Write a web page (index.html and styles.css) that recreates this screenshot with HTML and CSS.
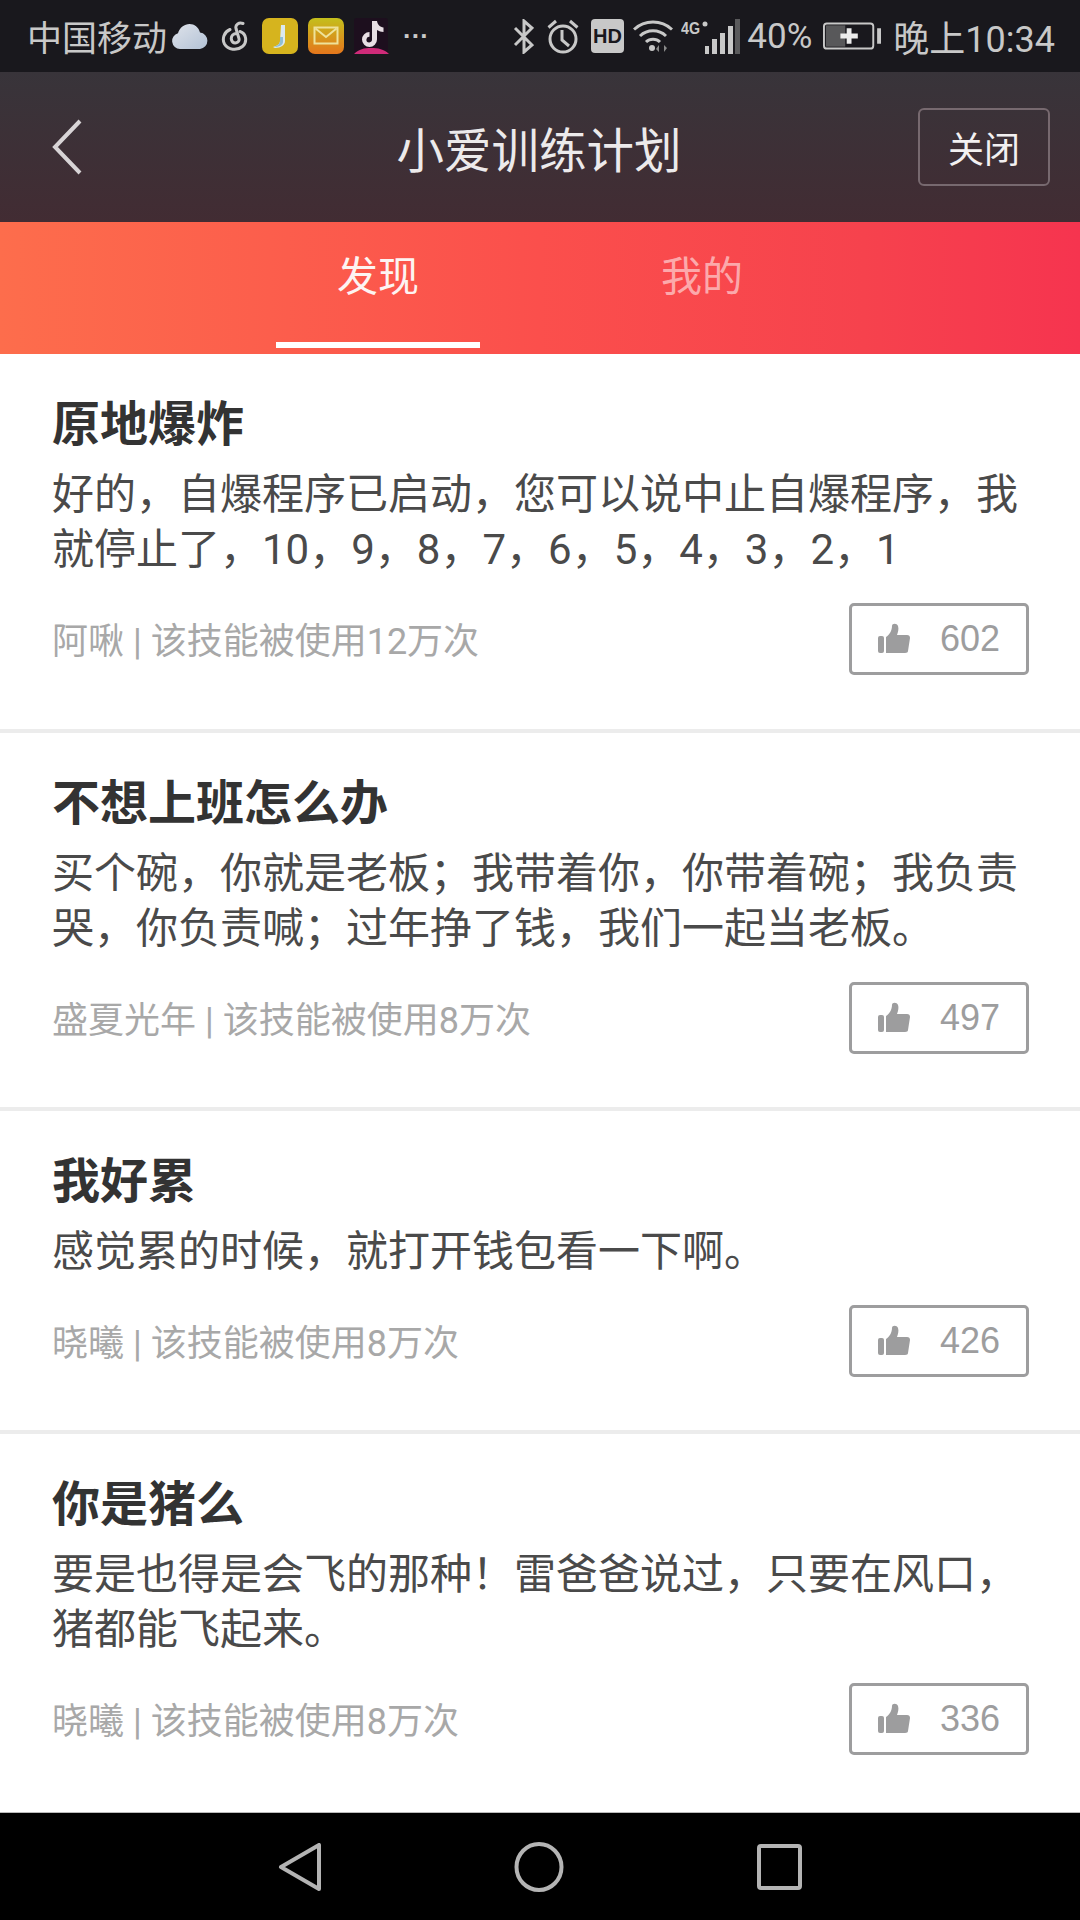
FILE: index.html
```html
<!DOCTYPE html>
<html lang="zh">
<head>
<meta charset="utf-8">
<title>小爱训练计划</title>
<link rel="stylesheet" href="styles.css">
</head>
<body>
<div class="app">
  <div class="status">
    <div class="status-left">
      <span class="carrier">中国移动</span>
      <svg class="ic cloud" viewBox="0 0 36 25"><defs><linearGradient id="cl" x1="0" y1="0" x2="1" y2="1"><stop offset="0" stop-color="#dfe3ea"/><stop offset="1" stop-color="#b3c2d6"/></linearGradient></defs><path d="M8 25a8 8 0 0 1-2-15.700C7.500 3.500 12.500 0 17.500 0c5 0 9 3 10.500 8.500a8.300 8.300 0 0 1 0 16.500z" fill="url(#cl)"/></svg>
      <svg class="ic netease" viewBox="0 0 28 30"><g fill="none" stroke="#c8c8c8" stroke-width="3" stroke-linecap="round"><path d="M22 2.500c-4-1.500-8 1-7 5l3 10c1 5-6 6-7.500 1.500-1-4 2-7 6-6.500"/><path d="M9 8.500C3 11 0.800 18 3.500 23c3.500 6 12.500 7 18 2.500 5-4.500 4-13-2.500-15"/></g></svg>
      <svg class="ic app-j" viewBox="0 0 36 36"><rect width="36" height="36" rx="7" fill="#d6b41e"/><path d="M19 7h4v16c0 4-4 7-10 7l-2-1c4-1 7-3 7-6z" fill="#dbe9ee"/><path d="M18 19h3v5c0 3-4 5-9 5 3-1 6-3 6-6z" fill="#8fbfd4"/></svg>
      <svg class="ic app-mail" viewBox="0 0 36 36"><defs><linearGradient id="mail" x1="0" y1="0" x2="0" y2="1"><stop offset="0" stop-color="#c4bf1c"/><stop offset="1" stop-color="#e5761c"/></linearGradient></defs><rect width="36" height="36" rx="7" fill="url(#mail)"/><rect x="6.500" y="9.500" width="23" height="16" fill="none" stroke="#eee29a" stroke-width="2"/><path d="M7.500 10.500L18 19l10.500-8.500" fill="none" stroke="#eee29a" stroke-width="2"/></svg>
      <svg class="ic app-tt" viewBox="0 0 36 36"><rect width="34" height="36" rx="3" fill="#1d0f1e"/><path d="M18 3h5c.5 3.500 3 6 6.500 6.500v4.500c-2.500 0-4.500-.8-6.500-2v9.500a7.500 7.500 0 1 1-7.500-7.500v4.800a2.800 2.800 0 1 0 2.500 2.800z" fill="#e8dfe4"/><path d="M0 36c5-5 10-6 17-6s13 1 18 6z" fill="#cf2b79"/></svg>
      <span class="dots">···</span>
    </div>
    <div class="status-right">
      <svg class="ic bt" viewBox="0 0 21 35"><path d="M2 9l17 17-8 7V2l8 7L2 26" fill="none" stroke="#c8c8c8" stroke-width="3"/></svg>
      <svg class="ic alarm" viewBox="0 0 32 35"><g fill="none" stroke="#c8c8c8" stroke-width="3"><circle cx="16" cy="20" r="13"/><path d="M15 11v10l7 6"/><path d="M1.500 8.500L9 2M30.500 8.500L23 2"/></g></svg>
      <svg class="ic hd" viewBox="0 0 33 34"><rect width="33" height="34" rx="4" fill="#c8c8c8"/><text x="16.500" y="24" class="hd-text">HD</text></svg>
      <svg class="ic wifi" viewBox="0 0 40 33"><g fill="none" stroke="#c8c8c8" stroke-width="3"><path d="M1 9.500a28 28 0 0 1 38 0"/><path d="M7 16a19 19 0 0 1 26 0"/><path d="M13 22a10 10 0 0 1 14 0"/></g><circle cx="19" cy="28" r="3" fill="#c8c8c8"/><path d="M26 32v-7l-3 4zM31 25v7l3-4z" fill="#8a8a8a"/></svg>
      <svg class="ic signal" viewBox="0 0 59 35"><text x="0" y="15" textLength="19" lengthAdjust="spacingAndGlyphs" class="sig-text">4G</text><circle cx="24" cy="5" r="2.500" fill="#c8c8c8"/><g fill="#c8c8c8"><rect x="24" y="27" width="4" height="8"/><rect x="31" y="20" width="5" height="15"/><rect x="39" y="14" width="5" height="21"/><rect x="47" y="7" width="5" height="28"/></g><rect x="54" y="0" width="5" height="35" fill="#5a5a5c"/></svg>
      <span class="pct">40%</span>
      <svg class="ic battery" viewBox="0 0 60 28"><rect x="1" y="1" width="51" height="26" rx="3" fill="none" stroke="#c8c8c8" stroke-width="2"/><rect x="3" y="3" width="20" height="22" fill="#58585a"/><path d="M18 14h18M27 6v16" stroke="#ececec" stroke-width="5"/><rect x="56" y="6" width="4" height="16" fill="#c8c8c8"/></svg>
      <span class="clock">晚上10:34</span>
    </div>
  </div>

  <header class="nav">
    <svg class="back" viewBox="0 0 30 56"><path d="M28 2L3 28l25 26" fill="none" stroke="#d8d4d6" stroke-width="4"/></svg>
    <h1 class="nav-title">小爱训练计划</h1>
    <button class="close">关闭</button>
  </header>

  <nav class="tabs">
    <div class="tab active">发现</div>
    <div class="tab">我的</div>
  </nav>

  <main class="list">
    <article class="card">
      <h2 class="title">原地爆炸</h2>
      <p class="body">好的，自爆程序已启动，您可以说中止自爆程序，我就停止了，10，9，8，7，6，5，4，3，2，1</p>
      <div class="foot">
        <span class="meta">阿啾 | 该技能被使用12万次</span>
        <div class="like"><svg class="thumb" viewBox="0 0 32 32"><use href="#thumb"/></svg><span>602</span></div>
      </div>
    </article>
    <article class="card">
      <h2 class="title">不想上班怎么办</h2>
      <p class="body">买个碗，你就是老板；我带着你，你带着碗；我负责哭，你负责喊；过年挣了钱，我们一起当老板。</p>
      <div class="foot">
        <span class="meta">盛夏光年 | 该技能被使用8万次</span>
        <div class="like"><svg class="thumb" viewBox="0 0 32 32"><use href="#thumb"/></svg><span>497</span></div>
      </div>
    </article>
    <article class="card">
      <h2 class="title">我好累</h2>
      <p class="body">感觉累的时候，就打开钱包看一下啊。</p>
      <div class="foot">
        <span class="meta">晓曦 | 该技能被使用8万次</span>
        <div class="like"><svg class="thumb" viewBox="0 0 32 32"><use href="#thumb"/></svg><span>426</span></div>
      </div>
    </article>
    <article class="card last">
      <h2 class="title">你是猪么</h2>
      <p class="body">要是也得是会飞的那种！雷爸爸说过，只要在风口，猪都能飞起来。</p>
      <div class="foot">
        <span class="meta">晓曦 | 该技能被使用8万次</span>
        <div class="like"><svg class="thumb" viewBox="0 0 32 32"><use href="#thumb"/></svg><span>336</span></div>
      </div>
    </article>
  </main>

  <footer class="softkeys">
    <svg class="key key-back" viewBox="0 0 43 48"><path d="M3 24L41 2v44z" fill="none" stroke="#b4b4b4" stroke-width="4" stroke-linejoin="round"/></svg>
    <svg class="key key-home" viewBox="0 0 50 50"><ellipse cx="25" cy="25" rx="22.500" ry="23" fill="none" stroke="#b4b4b4" stroke-width="4"/></svg>
    <svg class="key key-recent" viewBox="0 0 45 46"><rect x="2" y="2" width="41" height="42" rx="2" fill="none" stroke="#b4b4b4" stroke-width="4"/></svg>
  </footer>
</div>
<svg class="defs" width="0" height="0"><defs><g id="thumb"><rect x="0" y="13" width="6" height="17" rx="2" fill="#9d9d9e"/><path d="M8 14c3-2 6-6 6-11 0-3 5-3 6 0 1 3 0 6-1 9h10c2 0 3 1 3 3l-2 13c0 1-1 2-3 2H8z" fill="#9d9d9e"/></g></defs></svg>
</body>
</html>
```
FILE: styles.css
```css
* { box-sizing: border-box; margin: 0; padding: 0; }
html, body { width: 1080px; height: 1920px; overflow: hidden; background: #fff; }
body { font-family: "Noto Sans CJK SC", "Noto Sans", sans-serif; }
.defs { display: block; height: 0; }
.app { width: 1080px; height: 1920px; display: flex; flex-direction: column; }

.status { flex: none; height: 72px; background: #19181d; color: #c8c8c8; display: flex; justify-content: space-between; align-items: center; padding: 0 25px 0 27px; }
.status-left, .status-right { display: flex; align-items: center; }
.carrier { font-size: 35px; line-height: 40px; }
.ic { display: block; flex: none; }
.cloud { width: 36px; height: 25px; margin-left: 5px; }
.netease { width: 28px; height: 30px; margin-left: 13px; }
.app-j { width: 36px; height: 36px; margin-left: 13px; }
.app-mail { width: 36px; height: 36px; margin-left: 10px; }
.app-tt { width: 36px; height: 36px; margin-left: 10px; }
.dots { font-family: "Liberation Sans", sans-serif; font-size: 26px; font-weight: 700; margin-left: 13px; }
.bt { width: 21px; height: 35px; }
.alarm { width: 32px; height: 35px; margin-left: 13px; }
.hd { width: 33px; height: 34px; margin-left: 12px; }
.hd-text { font-family: "Liberation Sans", sans-serif; font-size: 20px; font-weight: 700; fill: #19181d; text-anchor: middle; }
.wifi { width: 40px; height: 33px; margin-left: 9px; }
.signal { width: 59px; height: 35px; margin-left: 8px; }
.sig-text { font-family: "Liberation Sans", sans-serif; font-size: 16px; font-weight: 700; fill: #c8c8c8; }
.pct { font-family: "Roboto", sans-serif; font-size: 35px; line-height: 40px; margin-left: 7px; padding-top: 2px; }
.battery { width: 58px; height: 28px; margin-left: 11px; }
.clock { font-family: "Roboto", "Noto Sans CJK SC", sans-serif; font-size: 36px; margin-left: 12px; }

.nav { flex: none; height: 150px; background: linear-gradient(180deg, #38343a 0%, #422c33 100%); display: flex; align-items: center; justify-content: space-between; padding: 0 30px 0 52px; position: relative; }
.back { width: 30px; height: 56px; }
.nav-title { position: absolute; left: 0; right: 0; text-align: center; font-size: 47.5px; font-weight: 400; color: #eceaeb; padding-right: 2px; }
.close { width: 132px; height: 78px; border: 2px solid #77696f; border-radius: 6px; background: transparent; color: #f2f0f1; font-family: inherit; font-size: 36px; position: relative; }

.tabs { flex: none; height: 132px; background: linear-gradient(90deg, #fd6d4c 0%, #fb4f4c 50%, #f6424d 80%, #f6344f 100%); display: flex; justify-content: center; gap: 120px; }
.tab { width: 204px; height: 126px; color: rgba(255,255,255,.55); font-size: 41px; display: flex; justify-content: center; padding-top: 23px; line-height: 56px; }
.tab.active { color: #fdf4f2; border-bottom: 6px solid #fff; }

.list { flex: 1; display: flex; flex-direction: column; }
.card { flex: none; padding: 34px 52px 0; border-bottom: 4px solid #ececec; height: 379px; }
.card:nth-child(2) { height: 378px; }
.card:nth-child(3) { height: 323px; }
.card.last { border-bottom: 0; height: 378px; }
.title { font-size: 48px; line-height: 64px; font-weight: 700; color: #333; }
.body { font-family: "Roboto", "Noto Sans CJK SC", sans-serif; font-size: 42px; line-height: 55px; color: #4a4a4a; margin-top: 15px; font-weight: 400; }
.foot { display: flex; justify-content: space-between; align-items: center; margin-top: 32px; margin-right: -1px; }
.meta { font-family: "Roboto", "Noto Sans CJK SC", sans-serif; font-size: 36px; line-height: 46px; color: #a8a8a8; }
.like { width: 180px; height: 72px; border: 3px solid #9d9d9e; border-radius: 5px; display: flex; align-items: center; padding-left: 26px; color: #9d9d9e; font-family: "Liberation Sans", sans-serif; font-size: 36px; gap: 30px; margin-top: -6px; }
.thumb { width: 32px; height: 32px; display: block; }

.softkeys { flex: none; height: 108px; background: #000; border-top: 1px solid #bbb; display: flex; align-items: center; justify-content: center; gap: 193px; }
.key { display: block; }
.key-back { width: 43px; height: 48px; }
.key-home { width: 50px; height: 50px; }
.key-recent { width: 45px; height: 46px; }
```
